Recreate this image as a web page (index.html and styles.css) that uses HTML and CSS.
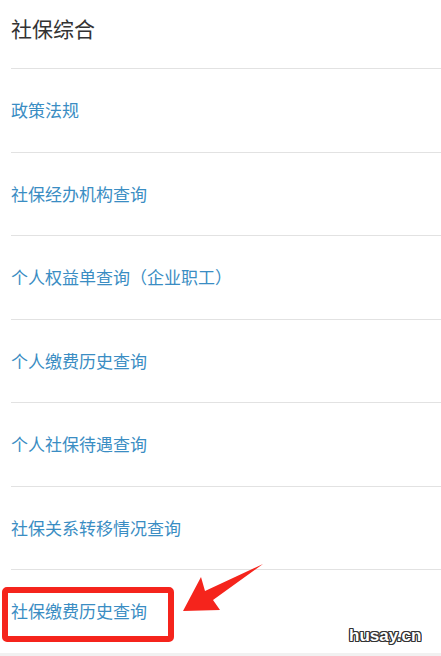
FILE: index.html
```html
<!DOCTYPE html>
<html lang="zh-CN">
<head>
<meta charset="utf-8">
<title>社保综合</title>
<link rel="stylesheet" href="styles.css">
</head>
<body>
<div class="page">
  <div class="header"><span class="title">社保综合</span></div>
  <ul class="menu">
    <li class="item"><a class="link" href="#">政策法规</a></li>
    <li class="item"><a class="link" href="#">社保经办机构查询</a></li>
    <li class="item"><a class="link" href="#">个人权益单查询（企业职工）</a></li>
    <li class="item"><a class="link" href="#">个人缴费历史查询</a></li>
    <li class="item"><a class="link" href="#">个人社保待遇查询</a></li>
    <li class="item"><a class="link" href="#">社保关系转移情况查询</a></li>
    <li class="item"><a class="link" href="#">社保缴费历史查询</a></li>
  </ul>
  <div class="footer-strip"></div>

  <div class="highlight-box"></div>
  <svg class="arrow" width="441" height="656" viewBox="0 0 441 656">
    <polygon points="183,611 201,577 205,591 263,564 213,600 220,610" fill="#f5241c"/>
  </svg>
  <div class="watermark">husay.cn</div>
</div>
</body>
</html>
```
FILE: styles.css
```css
html, body {
  margin: 0;
  padding: 0;
  background: #ffffff;
}
body {
  font-family: "Noto Sans CJK SC", "Noto Sans", sans-serif;
  width: 441px;
  height: 656px;
  overflow: hidden;
}
.page {
  position: relative;
  width: 441px;
  height: 656px;
}
.header {
  height: 68px;
  box-sizing: border-box;
  padding: 17px 0 0 11px;
}
.title {
  display: block;
  font-size: 21px;
  line-height: 22px;
  color: #333333;
}
.menu {
  list-style: none;
  margin: 0 0 0 11px;
  padding: 0;
}
.item {
  height: 83.5px;
  box-sizing: border-box;
  border-top: 1px solid #e2e2e2;
  display: flex;
  align-items: center;
}
.link {
  font-size: 17px;
  line-height: 20px;
  color: #3a8dc3;
  text-decoration: none;
}
.footer-strip {
  height: 4px;
  background: #f1f1f1;
}
.highlight-box {
  position: absolute;
  left: 2px;
  top: 587px;
  width: 172px;
  height: 55px;
  box-sizing: border-box;
  border: 6px solid #f5241c;
  border-radius: 5px;
}
.arrow {
  position: absolute;
  left: 0;
  top: 0;
}
.watermark {
  position: absolute;
  left: 349px;
  top: 626px;
  font-family: "Liberation Sans", Arial, sans-serif;
  font-weight: bold;
  font-size: 17px;
  line-height: 20px;
  color: #ffffff;
  text-shadow: -1px 0 #333, 1px 0 #333, 0 -1px #333, 0 1px #333,
    -1px -1px #333, 1px 1px #333, -1px 1px #333, 1px -1px #333;
}
```
